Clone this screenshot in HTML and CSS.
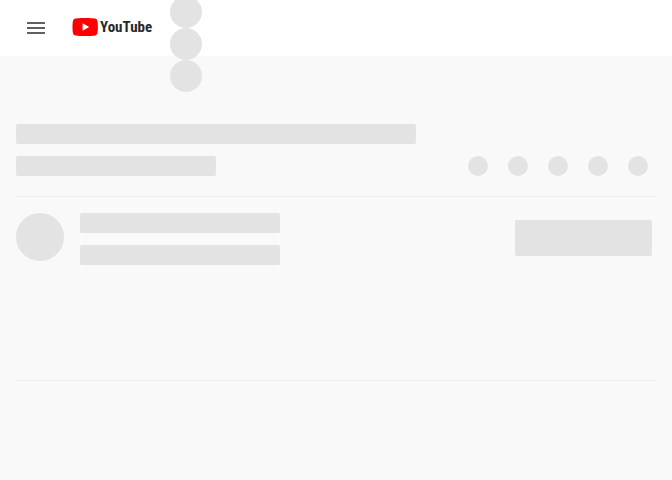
FILE: index.html
```
<!DOCTYPE html>
<html lang="en">
<head>
<meta charset="utf-8">
<meta name="viewport" content="width=device-width, initial-scale=1">
<title>YouTube</title>
<link rel="stylesheet" href="styles.css">
</head>
<body>
<header class="masthead">
  <button class="menu-button" type="button" aria-label="Guide">
    <svg width="24" height="24" viewBox="0 0 24 24" aria-hidden="true"><path fill="#606060" d="M3 6h18v2H3zM3 11h18v2H3zM3 16h18v2H3z"/></svg>
  </button>
  <a class="logo" href="/">
    <svg class="logo-mark" width="26" height="18" viewBox="0 0 26 18" aria-hidden="true">
      <path fill="#f00" d="M25.4 2.8A3.2 3.2 0 0 0 23.2.6C21.2 0 13.2 0 13.2 0S5.2 0 3.2.6A3.2 3.2 0 0 0 1 2.8C.5 4.8.5 9 .5 9s0 4.200.5 6.200a3.200 3.200 0 0 0 2.200 2.200c2 .6 10 .6 10 .6s8 0 10-.6a3.200 3.200 0 0 0 2.200-2.200c.5-2 .5-6.200.5-6.200s0-4.200-.5-6.200z"/>
      <path fill="#fff" d="M10.6 12.8 17.2 9l-6.6-3.8z"/>
    </svg>
    <span class="wordmark">YouTube</span>
  </a>
  <div class="masthead-skeleton" aria-hidden="true">
    <div class="bone circle circle-medium"></div>
    <div class="bone circle circle-medium"></div>
    <div class="bone circle circle-medium"></div>
  </div>
</header>
<main class="watch" aria-busy="true">
  <section class="primary-info">
    <div class="bone line line-title"></div>
    <div class="info-row">
      <div class="bone line line-short"></div>
      <div class="actions">
        <div class="bone circle circle-small"></div>
        <div class="bone circle circle-small"></div>
        <div class="bone circle circle-small"></div>
        <div class="bone circle circle-small"></div>
        <div class="bone circle circle-small"></div>
      </div>
    </div>
  </section>
  <section class="secondary-info">
    <div class="bone circle circle-large"></div>
    <div class="owner">
      <div class="bone line line-short"></div>
      <div class="bone line line-short"></div>
    </div>
    <div class="bone subscribe"></div>
  </section>
</main>
</body>
</html>
```
FILE: styles.css
```
* {
  box-sizing: border-box;
}

body {
  margin: 0;
  background: #f9f9f9;
  font-family: Roboto, "Liberation Sans", sans-serif;
}

.masthead {
  display: flex;
  align-items: center;
  height: 56px;
  padding: 0 16px;
  background: #fff;
}

.menu-button {
  display: flex;
  padding: 8px;
  border: 0;
  background: none;
}

.logo {
  display: flex;
  align-items: center;
  gap: 2px;
  width: 80px;
  height: 20px;
  margin: 0 18px 2px 16px;
  color: #282828;
  text-decoration: none;
}

.logo-mark {
  flex: none;
}

.wordmark {
  font-family: "Liberation Sans Narrow", "Roboto Condensed", "Open Sans Condensed", "Liberation Sans", sans-serif;
  font-size: 15px;
  font-weight: 700;
  line-height: 20px;
}

.masthead-skeleton {
  align-self: flex-start;
  margin-top: -4px;
}

.bone {
  background: #e3e3e3;
  border-radius: 2px;
}

.circle {
  flex: none;
  border-radius: 50%;
}

.circle-small {
  width: 20px;
  height: 20px;
}

.circle-medium {
  width: 32px;
  height: 32px;
}

.circle-large {
  width: 48px;
  height: 48px;
}

.line {
  height: 20px;
  max-width: 100%;
}

.line-title {
  width: 400px;
}

.line-short {
  width: 200px;
}

.watch {
  padding: 68px 16px 0;
}

.primary-info {
  display: grid;
  gap: 12px;
  padding-bottom: 20px;
  border-bottom: 1px solid #eee;
}

.info-row {
  display: flex;
  justify-content: space-between;
}

.actions {
  display: flex;
  gap: 20px;
  margin-right: 8px;
}

.secondary-info {
  display: flex;
  align-items: flex-start;
  gap: 16px;
  min-height: 184px;
  padding-top: 16px;
  border-bottom: 1px solid #eee;
}

.owner {
  display: grid;
  gap: 12px;
}

.subscribe {
  width: 137px;
  height: 36px;
  margin: 7px 4px 0 auto;
}
```
